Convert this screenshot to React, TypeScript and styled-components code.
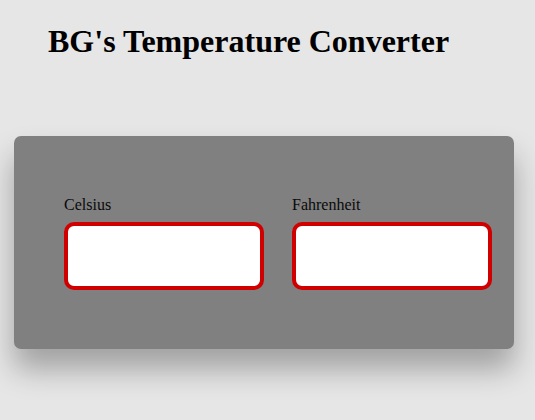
import React from "react";
import styled, { createGlobalStyle } from "styled-components";

const Global = createGlobalStyle`
  html, body { margin: 0; padding: 0; background: #e6e6e6; }
  body { font-family: "Liberation Serif", "Times New Roman", serif; color: #000; }
`;

const Page = styled.div`
  display: flex;
  flex-direction: column;
  align-items: flex-start;
  min-height: 420px;
  box-sizing: border-box;
  padding: 0 0 60px 14px;
`;

const Title = styled.h1`
  margin: 0;
  padding: 23px 0 0 34px;
  font-size: 32px;
  font-weight: bold;
  line-height: 37px;
  height: 113px;
`;

const Card = styled.div`
  width: 500px;
  height: 213px;
  box-sizing: border-box;
  background: #808080;
  border-radius: 7px;
  box-shadow: 0 20px 30px rgba(0, 0, 0, 0.3);
  display: flex;
  gap: 28px;
  padding: 60px 0 0 50px;
`;

const Field = styled.label`
  display: flex;
  flex-direction: column;
  gap: 8px;
  font-size: 16px;
  line-height: 18px;
  color: #0a0a0a;
`;

const Input = styled.input`
  width: 200px;
  height: 68px;
  box-sizing: border-box;
  border: 4px solid #d00000;
  border-radius: 10px;
  background: #fff;
  outline: none;
  font-family: inherit;
  font-size: 16px;
`;

export default function App() {
  return (
    <>
      <Global />
      <Page>
        <Title>BG's Temperature Converter</Title>
        <Card>
          <Field>
            Celsius
            <Input type="text" />
          </Field>
          <Field>
            Fahrenheit
            <Input type="text" />
          </Field>
        </Card>
      </Page>
    </>
  );
}
